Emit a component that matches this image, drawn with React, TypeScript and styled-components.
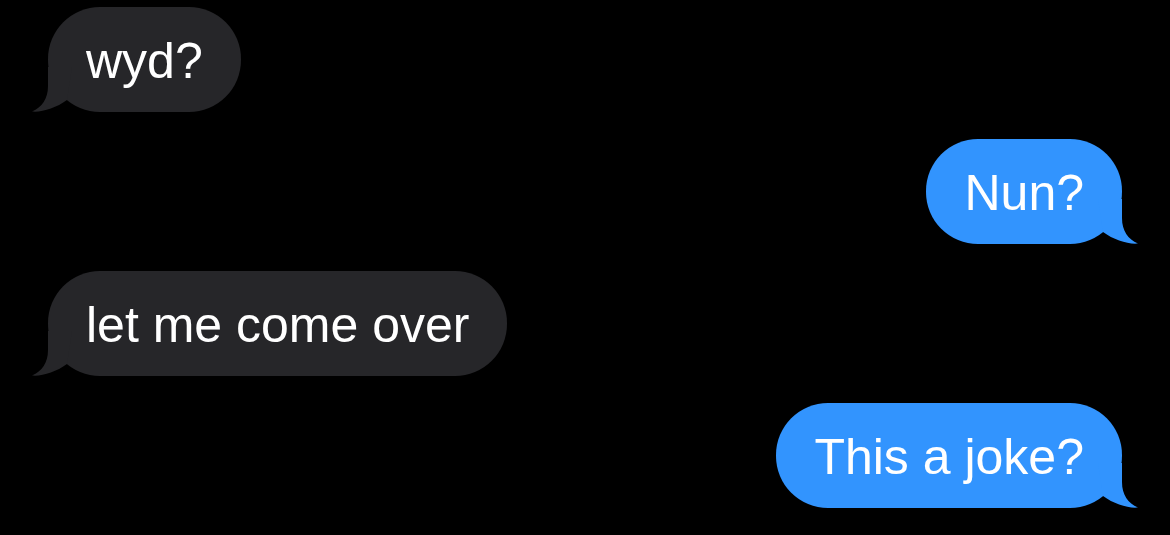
import React from "react";
import styled, { createGlobalStyle } from "styled-components";

const Global = createGlobalStyle`
  html, body {
    margin: 0;
    padding: 0;
    background: #000;
  }
  body {
    font-family: "Liberation Sans", Arial, sans-serif;
  }
`;

const Screen = styled.div`
  width: 1170px;
  height: 535px;
  background: #000;
  box-sizing: border-box;
  padding: 7px 48px 0 48px;
  display: flex;
  flex-direction: column;
  gap: 27px;
  overflow: hidden;
`;

const Row = styled.div<{ $out: boolean }>`
  display: flex;
  justify-content: ${(p) => (p.$out ? "flex-end" : "flex-start")};
`;

const Bubble = styled.div<{ $out: boolean }>`
  position: relative;
  box-sizing: border-box;
  height: 105px;
  padding: 4px 38px 0 38px;
  border-radius: 52px;
  background: ${(p) => (p.$out ? "#3294FE" : "#262629")};
  color: #fff;
  font-size: 50px;
  line-height: 101px;
  white-space: nowrap;
`;

const Tail = styled.svg<{ $out: boolean }>`
  position: absolute;
  bottom: 0;
  width: 50px;
  height: 45px;
  ${(p) =>
    p.$out
      ? "right: -16px; transform: scaleX(-1);"
      : "left: -16px;"}
`;

const Message = ({ text, out }: { text: string; out: boolean }) => (
  <Row $out={out}>
    <Bubble $out={out}>
      {text}
      <Tail $out={out} viewBox="0 0 50 45">
        <path
          d="M16 0 L16 19 C16 32 10 40 0 44.5 C10 45.5 24 41 35 33 L40 0 Z"
          fill={out ? "#3294FE" : "#262629"}
        />
      </Tail>
    </Bubble>
  </Row>
);

export default function App() {
  return (
    <>
      <Global />
      <Screen>
        <Message text="wyd?" out={false} />
        <Message text="Nun?" out={true} />
        <Message text="let me come over" out={false} />
        <Message text="This a joke?" out={true} />
      </Screen>
    </>
  );
}
